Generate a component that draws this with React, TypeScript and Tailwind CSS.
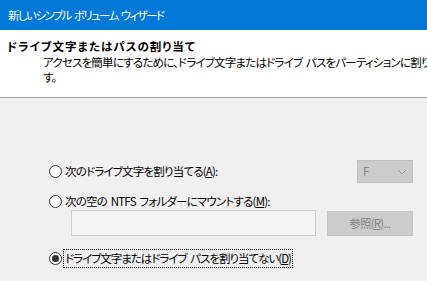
import { FC } from 'react';

const Radio: FC<{ checked?: boolean }> = ({ checked }) => (
    <span className="w-[13px] h-[13px] rounded-full border border-[#333333] bg-white flex items-center justify-center flex-shrink-0">
        {checked && <span className="w-[7px] h-[7px] rounded-full bg-[#333333]" />}
    </span>
);

const App: FC = () => {
    return (
        <div className="w-[427px] h-[281px] overflow-hidden bg-[#f0f0f0] text-[11.5px] tracking-[-0.8px] text-black font-['Noto_Sans_CJK_JP','Noto_Sans',sans-serif] [font-feature-settings:'palt'] leading-[15px] [word-spacing:2px]">
            {/* Title bar */}
            <div className="h-[30px] bg-[#0078d7] text-white pl-[8px] flex items-center tracking-[-1.6px]">
                新しいシンプル ボリューム ウィザード
            </div>

            {/* Header */}
            <div className="h-[67px] bg-white pl-[7px] pt-[9px] whitespace-nowrap overflow-hidden">
                <div className="font-bold tracking-[1px]">ドライブ文字またはパスの割り当て</div>
                <div className="pl-[36px] pt-[1px]">
                    アクセスを簡単にするために、ドライブ文字またはドライブ パスをパーティションに割り当てま
                </div>
                <div className="pl-[36px]">す。</div>
            </div>
            <div className="h-px bg-[#a0a0a0]" />

            {/* Options */}
            <div className="pl-[49px] pr-[14px] pt-[62px] flex flex-col">
                <div className="flex items-center justify-between h-[23px]">
                    <div className="flex items-center gap-[3px]">
                        <Radio />
                        <span>
                            次のドライブ文字を割り当てる(<span className="underline">A</span>):
                        </span>
                    </div>
                    <div className="w-[56px] h-[23px] bg-[#cccccc] border border-[#bfbfbf] flex items-center justify-between pl-[5px] pr-[5px] text-[#838383]">
                        <span>F</span>
                        <svg className="w-[10px] h-[10px]" viewBox="0 0 10 10" fill="none" stroke="#9a9a9a" strokeWidth={1}>
                            <path d="M1 3l4 4 4-4" />
                        </svg>
                    </div>
                </div>

                <div className="flex items-center gap-[3px] mt-[10px] h-[16px]">
                    <Radio />
                    <span>
                        次の空の NTFS フォルダーにマウントする(<span className="underline">M</span>):
                    </span>
                </div>

                <div className="flex items-center mt-[1px] pl-[22px] gap-[11px]">
                    <div className="w-[245px] h-[26px] bg-[#f4f4f4] border border-[#cccccc]" />
                    <div className="w-[86px] h-[25px] bg-[#cccccc] border border-[#c4c4c4] flex items-center justify-center text-[#838383]">
                        参照(<span className="underline">R</span>)...
                    </div>
                </div>

                <div className="flex items-center gap-[1px] mt-[13px]">
                    <Radio checked />
                    <span className="border border-dotted border-black px-[1px] py-[1px] tracking-[-1px]">
                        ドライブ文字またはドライブ パスを割り当てない(<span className="underline">D</span>)
                    </span>
                </div>
            </div>
        </div>
    );
};

export default App;
